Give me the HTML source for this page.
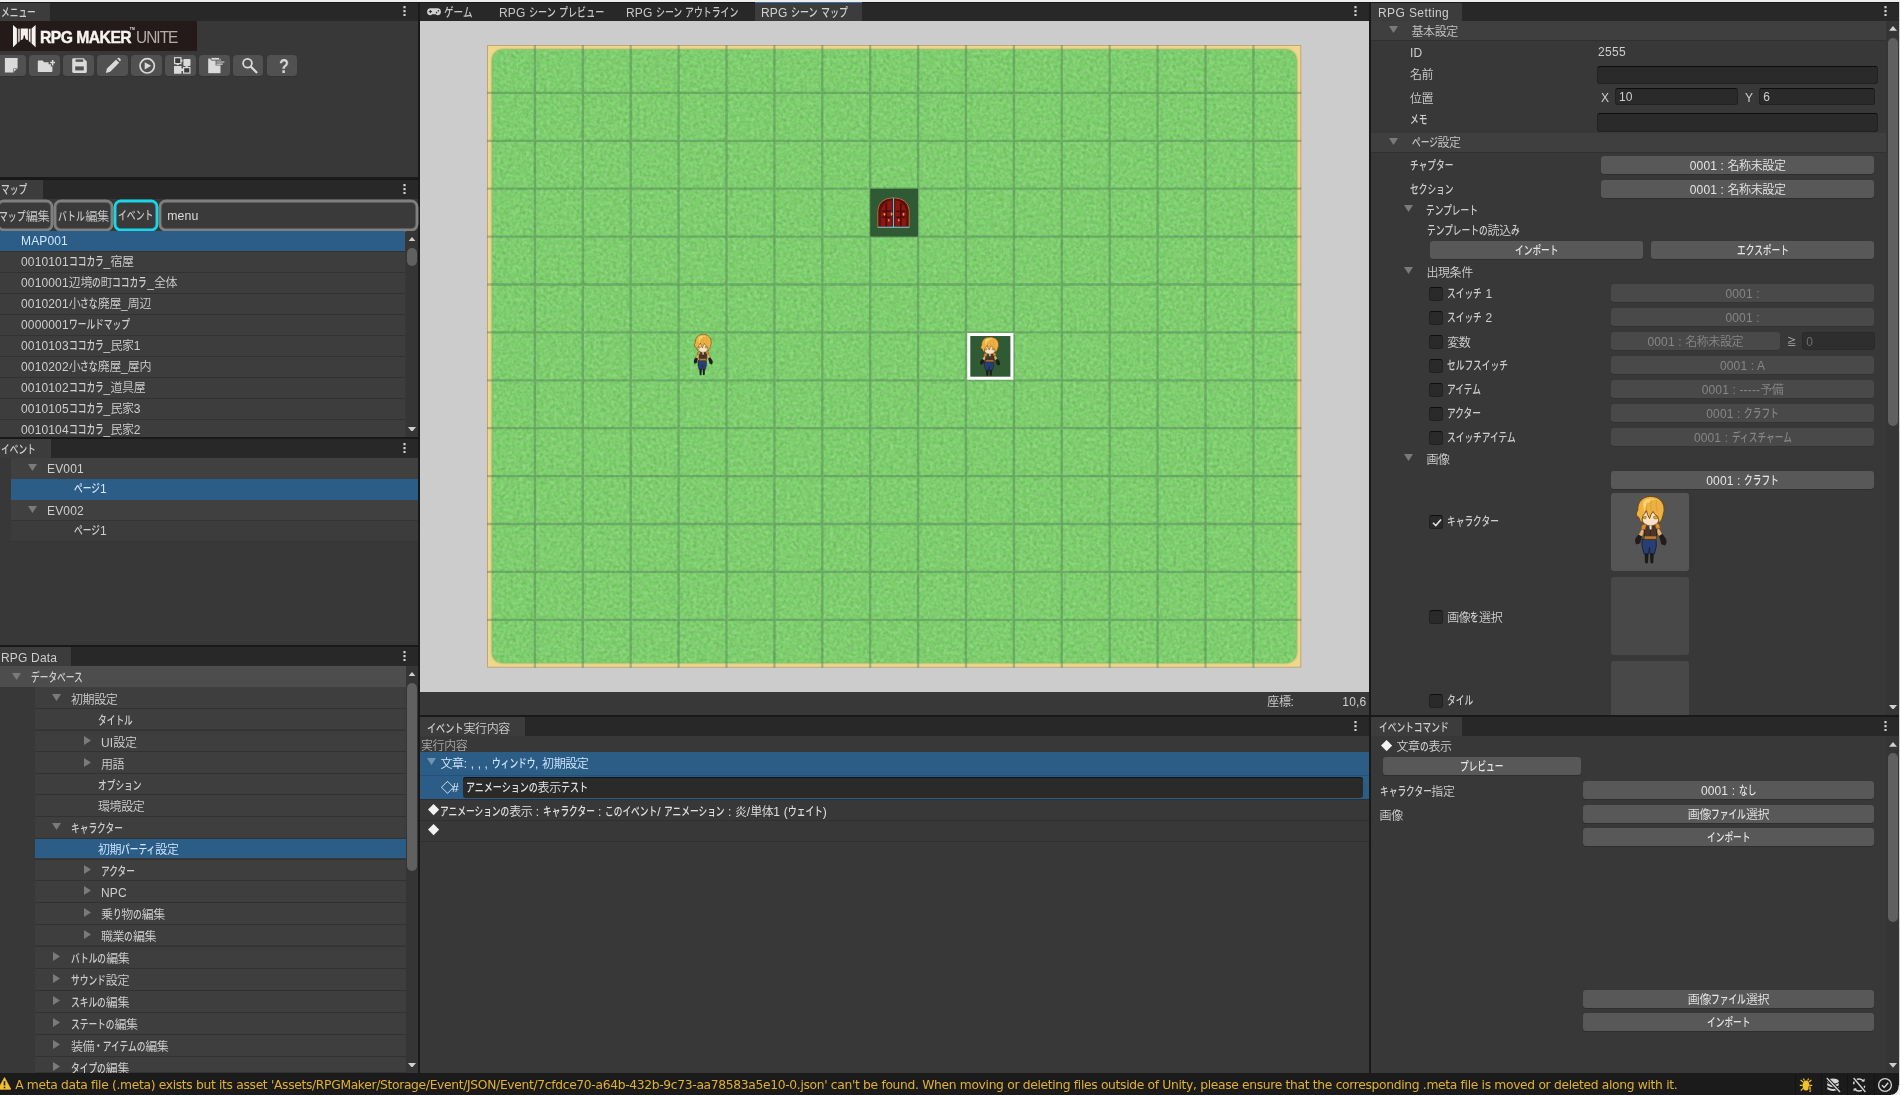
<!DOCTYPE html>
<html lang="ja"><head><meta charset="utf-8"><title>RPG Maker Unite</title>
<style>
html,body{margin:0;padding:0}
body{will-change:transform;width:1900px;height:1095px;overflow:hidden;position:relative;background:#383838;font-family:"Liberation Sans","Noto Sans CJK JP",sans-serif;font-size:12px;color:#cecece}
.t{position:absolute;height:16px;line-height:16px;white-space:nowrap;letter-spacing:.15px}
.k{display:inline-block;transform:scaleX(.725);transform-origin:0 50%;white-space:nowrap;letter-spacing:0;font-weight:500}
.j{letter-spacing:-.4px;font-weight:350}
.a{position:absolute;display:block}
.btn{position:absolute;box-sizing:border-box;background:#585858;border:0 solid #303030;box-shadow:0 .8px 0 #2b2b2b;border-radius:3px;display:flex;align-items:center;justify-content:center;white-space:nowrap;line-height:16px;color:#e4e4e4;letter-spacing:.15px;padding-top:2.2px}
.btn.dis{background:#494949;color:#868686;box-shadow:0 .6px 0 #303030}
.inp{position:absolute;box-sizing:border-box;background:#2a2a2a;border:1px solid #212121;border-top-color:#0d0d0d;border-radius:3px;line-height:16px;padding:2px 0 0 3px;display:flex;align-items:center;white-space:nowrap;color:#cecece}
.inp.dis{color:#6e6e6e;background:#2e2e2e;border-color:#2a2a2a}
.chk{position:absolute;box-sizing:border-box;width:14px;height:14px;background:#2a2a2a;border:1px solid #212121;border-top-color:#0d0d0d;border-radius:3px}
.tab{position:absolute;background:#3c3c3c;height:18px}
</style></head><body>

<div style="position:absolute;left:0px;top:0px;width:1900.00px;height:2.00px;background:#eeeeee;"></div>
<div style="position:absolute;left:0px;top:2px;width:1900.00px;height:1.00px;background:#191919;"></div>
<div style="position:absolute;left:418px;top:3px;width:2.00px;height:1070.00px;background:#191919;"></div>
<div style="position:absolute;left:1369px;top:3px;width:2.00px;height:1070.00px;background:#191919;"></div>
<div style="position:absolute;left:0px;top:3px;width:418.00px;height:18.00px;background:#282828;"></div>
<div style="position:absolute;left:0px;top:3px;width:50.00px;height:18.00px;background:#3c3c3c;"></div>
<div class="t" style="left:1px;top:4.5px;"><span class="k" style="margin-right:-13.20px">メニュー</span></div>
<svg class="a" style="left:403.0px;top:6.1px" width="3" height="10.2" viewBox="0 0 3 10.2"><path d="M.4 0h2.2v2.3h-2.2zM.4 3.95h2.2v2.3h-2.2zM.4 7.9h2.2v2.3h-2.2z" fill="#cfcfcf"/></svg>
<div style="position:absolute;left:0px;top:21px;width:197.00px;height:29.50px;background:#231a19;"></div>
<svg class="a" style="left:12px;top:24px" width="26" height="26" viewBox="0 0 26 26">
<path d="M1 1.1L4.9 4.5V19.4L1 23.3Z" fill="#f8f4f0"/>
<path d="M23.6 1.1L19.6 4.5V19.4L23.6 23.3Z" fill="#f8f4f0"/>
<path d="M5.9 4.8H7.7V17.2L5.9 18.4Z" fill="#f1ece7"/><path d="M5.9 4.8H6.5V18L5.9 18.4Z" fill="#8e8886"/>
<path d="M18.6 4.8H16.8V17.2L18.6 18.4Z" fill="#f1ece7"/><path d="M18.6 4.8H18V18L18.6 18.4Z" fill="#8e8886"/>
<path d="M8.7 4.5H15.9V16.2L14 15.6L13 13.4Q13.6 11.6 12.3 11.3Q11 11.6 11.6 13.4L10.6 15.6L8.7 16.2Z" fill="#f5f0ec"/>
</svg>
<div class="t" style="left:39.8px;top:28px;height:20px;line-height:20px;font-size:16.6px;font-weight:bold;color:#f7f3ef;letter-spacing:-.55px;-webkit-text-stroke:.45px #f7f3ef;transform:scaleX(.945);transform-origin:0 50%">RPG MAKER</div>
<div class="t" style="left:129.8px;top:26.4px;height:6px;line-height:6px;font-size:3.4px;font-weight:bold;color:#e8e2dc">TM</div>
<div class="t" style="left:136.3px;top:28px;height:20px;line-height:20px;font-size:16.6px;color:#cfc6c0;letter-spacing:-1.05px;font-weight:normal;opacity:.85;transform:scaleX(.93);transform-origin:0 50%">UNITE</div>
<div style="position:absolute;left:-4.6px;top:55px;width:30.60px;height:21.20px;background:#515151;border-radius:3.5px;box-shadow:0 .5px 0 #2c2c2c;"></div>
<svg class="a" style="left:1.20px;top:56px;overflow:visible" width="21" height="19" viewBox="0 0 21 19"><path d="M3.9 1.9H16.6V12.4L12.4 16.5H3.9Z" fill="#dadada"/><path d="M12.4 16.5V12.4H16.6Z" fill="#515151"/><path d="M12.9 15.4V12.9H15.4Z" fill="#dadada"/></svg>
<div style="position:absolute;left:29.32px;top:55px;width:30.60px;height:21.20px;background:#515151;border-radius:3.5px;box-shadow:0 .5px 0 #2c2c2c;"></div>
<svg class="a" style="left:35.12px;top:56px;overflow:visible" width="21" height="19" viewBox="0 0 21 19"><path d="M2.8 5.4Q2.8 4.6 3.6 4.6H7.6L9.2 6.2H13.8L15.4 7.6L17.4 9V15.3Q17.4 16.1 16.6 16.1H3.6Q2.8 16.1 2.8 15.3Z" fill="#dadada"/><path d="M17.6 2.6V10.6M13.6 6.6H21.6" stroke="#515151" stroke-width="3.4" fill="none"/><path d="M17.6 3.9V9.4M15.2 6.6H20" stroke="#dadada" stroke-width="1.5" fill="none"/></svg>
<div style="position:absolute;left:63.24px;top:55px;width:30.60px;height:21.20px;background:#515151;border-radius:3.5px;box-shadow:0 .5px 0 #2c2c2c;"></div>
<svg class="a" style="left:69.04px;top:56px;overflow:visible" width="21" height="19" viewBox="0 0 21 19"><path d="M3.2 3.6Q3.2 2.3 4.5 2.3H14.6L17.8 5.4V15.6Q17.8 16.9 16.5 16.9H4.5Q3.2 16.9 3.2 15.6Z" fill="#dadada"/><rect x="6.6" y="3.4" width="7.6" height="2.4" fill="#515151"/><rect x="6.2" y="10.4" width="8.6" height="4" fill="#515151"/></svg>
<div style="position:absolute;left:97.16000000000001px;top:55px;width:30.60px;height:21.20px;background:#515151;border-radius:3.5px;box-shadow:0 .5px 0 #2c2c2c;"></div>
<svg class="a" style="left:102.96px;top:56px;overflow:visible" width="21" height="19" viewBox="0 0 21 19"><path d="M2.8 16.9L4 12.6L13.2 3.4L16.4 6.6L7.2 15.8Z" fill="#dadada"/><path d="M14.2 2.6L15 1.9Q15.7 1.4 16.3 2L17.6 3.3Q18.2 3.9 17.6 4.5L17 5.4Z" fill="#dadada"/><path d="M13.2 3.4L16.4 6.6" stroke="#515151" stroke-width=".9"/></svg>
<div style="position:absolute;left:131.08px;top:55px;width:30.60px;height:21.20px;background:#515151;border-radius:3.5px;box-shadow:0 .5px 0 #2c2c2c;"></div>
<svg class="a" style="left:136.88px;top:56px;overflow:visible" width="21" height="19" viewBox="0 0 21 19"><circle cx="10.2" cy="9.86" r="7.15" fill="none" stroke="#dadada" stroke-width="1.7"/><path d="M7.7 6.2V13.5L14.2 9.86Z" fill="#dadada"/></svg>
<div style="position:absolute;left:165.00000000000003px;top:55px;width:30.60px;height:21.20px;background:#515151;border-radius:3.5px;box-shadow:0 .5px 0 #2c2c2c;"></div>
<svg class="a" style="left:170.80px;top:56px;overflow:visible" width="21" height="19" viewBox="0 0 21 19"><rect x="3.6" y="1.7" width="6.3" height="5.9" fill="#3a3a3a" stroke="#dadada" stroke-width="1.2"/><rect x="12.4" y="3" width="7.1" height="7.1" rx=".8" fill="#dadada"/><path d="M3 10.1H10.5V12.6H12V15H10.5V17.7H3Z" fill="#dadada"/><rect x="12.6" y="11.6" width="6.3" height="5.5" fill="#3a3a3a" stroke="#dadada" stroke-width="1.2"/><path d="M9.9 3.6h1.6v2.2h-1.6zM5.6 7.6h2.2v1.5h-2.2zM14.6 10.1h2.2v1.5h-2.2z" fill="#dadada"/></svg>
<div style="position:absolute;left:198.92000000000002px;top:55px;width:30.60px;height:21.20px;background:#515151;border-radius:3.5px;box-shadow:0 .5px 0 #2c2c2c;"></div>
<svg class="a" style="left:204.72px;top:56px;overflow:visible" width="21" height="19" viewBox="0 0 21 19"><path d="M3.2 2.6H15.5V17.2H3.2Z" fill="#dadada"/><rect x="6" y="1.4" width="8.5" height="2.8" rx=".6" fill="#dadada" stroke="#515151" stroke-width=".9"/><path d="M10.6 4.6H20.4V9.4H10.6Z" fill="#515151"/><path d="M11.4 6H19.4M11.4 8.1H17.6" stroke="#dadada" stroke-width="1.2"/></svg>
<div style="position:absolute;left:232.84px;top:55px;width:30.60px;height:21.20px;background:#515151;border-radius:3.5px;box-shadow:0 .5px 0 #2c2c2c;"></div>
<svg class="a" style="left:238.64px;top:56px;overflow:visible" width="21" height="19" viewBox="0 0 21 19"><circle cx="8.5" cy="7.25" r="4.4" fill="none" stroke="#dadada" stroke-width="1.8"/><path d="M11.9 10.7L17.4 16.2" stroke="#dadada" stroke-width="2.3" stroke-linecap="round"/></svg>
<div style="position:absolute;left:266.76px;top:55px;width:30.60px;height:21.20px;background:#515151;border-radius:3.5px;box-shadow:0 .5px 0 #2c2c2c;"></div>
<div class="t" style="left:277.5px;top:55.6px;height:20px;line-height:20px;font-size:19.4px;font-weight:bold;color:#dadada;transform:scaleX(.84);transform-origin:50% 50%">?</div>
<div style="position:absolute;left:0px;top:177.3px;width:418.00px;height:2.70px;background:#191919;"></div>
<div style="position:absolute;left:0px;top:180px;width:418.00px;height:18.60px;background:#282828;"></div>
<div style="position:absolute;left:0px;top:180px;width:43.00px;height:18.60px;background:#3c3c3c;"></div>
<div class="t" style="left:1px;top:182.0px;"><span class="k" style="margin-right:-9.90px">マップ</span></div>
<svg class="a" style="left:403.0px;top:183.6px" width="3" height="10.2" viewBox="0 0 3 10.2"><path d="M.4 0h2.2v2.3h-2.2zM.4 3.95h2.2v2.3h-2.2zM.4 7.9h2.2v2.3h-2.2z" fill="#cfcfcf"/></svg>
<div style="position:absolute;box-sizing:border-box;left:-3.5px;top:199.6px;width:56.6px;height:31px;border:2px solid #808080;box-shadow:0 0 0 .45px #808080,inset 0 0 0 .45px #808080;border-radius:7px;background:#3a3a3a"></div>
<div class="t" style="left:-0.8px;top:208.7px;color:#c8c8c8;font-size:12.2px;"><span class="k" style="margin-right:-10.06px">マップ</span><span class="j">編集</span></div>
<div style="position:absolute;box-sizing:border-box;left:54.1px;top:199.6px;width:59.2px;height:31px;border:2px solid #808080;box-shadow:0 0 0 .45px #808080,inset 0 0 0 .45px #808080;border-radius:7px;background:#3a3a3a"></div>
<div class="t" style="left:58.3px;top:208.7px;color:#c8c8c8;font-size:12.2px;"><span class="k" style="margin-right:-10.06px">バトル</span><span class="j">編集</span></div>
<div style="position:absolute;box-sizing:border-box;left:114.1px;top:199.6px;width:44.2px;height:31px;border:2px solid #19d7e6;box-shadow:0 0 0 .45px #19d7e6,inset 0 0 0 .45px #19d7e6;border-radius:7px;background:#3a3a3a"></div>
<div class="t" style="left:118.2px;top:208.0px;color:#c8c8c8;font-size:12.2px;"><span class="k" style="margin-right:-13.42px">イベント</span></div>
<div style="position:absolute;box-sizing:border-box;left:159.1px;top:199.6px;width:258.6px;height:31px;border:2px solid #808080;box-shadow:0 0 0 .45px #808080,inset 0 0 0 .45px #808080;border-radius:7px;background:#3a3a3a"></div>
<div class="t" style="left:167.2px;top:208.2px;color:#dcdcdc;font-size:12.3px;">menu</div>
<div style="position:absolute;left:0px;top:231px;width:405.00px;height:206.00px;background:#3d3d3d;"></div>
<div style="position:absolute;left:0px;top:231px;width:405.00px;height:20.00px;background:#2c5d87;"></div>
<div style="position:absolute;left:0px;top:251px;width:405.00px;height:1.00px;background:#323232;"></div>
<div class="t" style="left:21px;top:232.5px;color:#cfe6ff;">MAP001</div>
<div style="position:absolute;left:0px;top:272px;width:405.00px;height:1.00px;background:#323232;"></div>
<div class="t" style="left:21px;top:254.2px;">0010101<span class="k" style="margin-right:-13.20px">ココカラ</span>_<span class="j">宿屋</span></div>
<div style="position:absolute;left:0px;top:293px;width:405.00px;height:1.00px;background:#323232;"></div>
<div class="t" style="left:21px;top:275.2px;">0010001<span class="j">辺境</span><span class="k" style="margin-right:-3.30px">の</span><span class="j">町</span><span class="k" style="margin-right:-13.20px">ココカラ</span>_<span class="j">全体</span></div>
<div style="position:absolute;left:0px;top:314px;width:405.00px;height:1.00px;background:#323232;"></div>
<div class="t" style="left:21px;top:296.2px;">0010201<span class="j">小</span><span class="k" style="margin-right:-6.60px">さな</span><span class="j">廃屋</span>_<span class="j">周辺</span></div>
<div style="position:absolute;left:0px;top:335px;width:405.00px;height:1.00px;background:#323232;"></div>
<div class="t" style="left:21px;top:316.5px;">0000001<span class="k" style="margin-right:-23.10px">ワールドマップ</span></div>
<div style="position:absolute;left:0px;top:356px;width:405.00px;height:1.00px;background:#323232;"></div>
<div class="t" style="left:21px;top:338.2px;">0010103<span class="k" style="margin-right:-13.20px">ココカラ</span>_<span class="j">民家</span>1</div>
<div style="position:absolute;left:0px;top:377px;width:405.00px;height:1.00px;background:#323232;"></div>
<div class="t" style="left:21px;top:359.2px;">0010202<span class="j">小</span><span class="k" style="margin-right:-6.60px">さな</span><span class="j">廃屋</span>_<span class="j">屋内</span></div>
<div style="position:absolute;left:0px;top:398px;width:405.00px;height:1.00px;background:#323232;"></div>
<div class="t" style="left:21px;top:380.2px;">0010102<span class="k" style="margin-right:-13.20px">ココカラ</span>_<span class="j">道具屋</span></div>
<div style="position:absolute;left:0px;top:419px;width:405.00px;height:1.00px;background:#323232;"></div>
<div class="t" style="left:21px;top:401.2px;">0010105<span class="k" style="margin-right:-13.20px">ココカラ</span>_<span class="j">民家</span>3</div>
<div style="position:absolute;left:0px;top:440px;width:405.00px;height:1.00px;background:#323232;"></div>
<div class="t" style="left:21px;top:422.2px;">0010104<span class="k" style="margin-right:-13.20px">ココカラ</span>_<span class="j">民家</span>2</div>
<div style="position:absolute;left:405.5px;top:231px;width:12.50px;height:206.00px;background:#353535;"></div>
<svg class="a" style="left:407.75px;top:236.6px" width="8" height="4.8" viewBox="0 0 8 4.8"><path d="M0 4.8H8L4 0Z" fill="#d0d0d0"/></svg>
<svg class="a" style="left:407.75px;top:426.6px" width="8" height="4.8" viewBox="0 0 8 4.8"><path d="M0 0H8L4 4.8Z" fill="#d0d0d0"/></svg>
<div style="position:absolute;left:406.95px;top:248px;width:9.60px;height:18.20px;background:#606060;border-radius:5px;"></div>
<div style="position:absolute;left:0px;top:437px;width:418.00px;height:2.30px;background:#191919;"></div>
<div style="position:absolute;left:0px;top:439.3px;width:418.00px;height:18.30px;background:#282828;"></div>
<div style="position:absolute;left:0px;top:439.3px;width:51.00px;height:18.30px;background:#3c3c3c;"></div>
<div class="t" style="left:1px;top:441.5px;"><span class="k" style="margin-right:-13.20px">イベント</span></div>
<svg class="a" style="left:403.0px;top:442.6px" width="3" height="10.2" viewBox="0 0 3 10.2"><path d="M.4 0h2.2v2.3h-2.2zM.4 3.95h2.2v2.3h-2.2zM.4 7.9h2.2v2.3h-2.2z" fill="#cfcfcf"/></svg>
<div style="position:absolute;left:11px;top:458px;width:407.00px;height:21.00px;background:#404040;"></div>
<div style="position:absolute;left:11px;top:479px;width:407.00px;height:20.50px;background:#2c5d87;"></div>
<div style="position:absolute;left:11px;top:500px;width:407.00px;height:20.00px;background:#404040;"></div>
<div style="position:absolute;left:11px;top:520px;width:407.00px;height:1.00px;background:#343434;"></div>
<div style="position:absolute;left:11px;top:521px;width:407.00px;height:20.00px;background:#3c3c3c;"></div>
<div style="position:absolute;left:11px;top:541px;width:407.00px;height:1.00px;background:#353535;"></div>
<svg class="a" style="left:28.0px;top:463.5px" width="9" height="7" viewBox="0 0 9 7"><path d="M0 0H9L4.5 7Z" fill="#7a7a7a"/></svg>
<div class="t" style="left:47px;top:461.0px;">EV001</div>
<div class="t" style="left:74px;top:481.2px;color:#cfe6ff;"><span class="k" style="margin-right:-9.90px">ページ</span>1</div>
<svg class="a" style="left:28.0px;top:505.5px" width="9" height="7" viewBox="0 0 9 7"><path d="M0 0H9L4.5 7Z" fill="#7a7a7a"/></svg>
<div class="t" style="left:47px;top:503.0px;">EV002</div>
<div class="t" style="left:74px;top:523.1px;"><span class="k" style="margin-right:-9.90px">ページ</span>1</div>
<div style="position:absolute;left:0px;top:645px;width:418.00px;height:2.30px;background:#191919;"></div>
<div style="position:absolute;left:0px;top:647.3px;width:418.00px;height:18.70px;background:#282828;"></div>
<div style="position:absolute;left:0px;top:647.3px;width:71.00px;height:18.70px;background:#3c3c3c;"></div>
<div class="t" style="left:1px;top:649.5px;letter-spacing:.18px;">RPG Data</div>
<svg class="a" style="left:403.0px;top:650.6px" width="3" height="10.2" viewBox="0 0 3 10.2"><path d="M.4 0h2.2v2.3h-2.2zM.4 3.95h2.2v2.3h-2.2zM.4 7.9h2.2v2.3h-2.2z" fill="#cfcfcf"/></svg>
<div style="position:absolute;left:0px;top:666px;width:405.50px;height:21.00px;background:#4d4d4d;"></div>
<svg class="a" style="left:12.0px;top:672.5px" width="9" height="7" viewBox="0 0 9 7"><path d="M0 0H9L4.5 7Z" fill="#7a7a7a"/></svg>
<div class="t" style="left:31px;top:669.5px;"><span class="k" style="margin-right:-19.80px">データベース</span></div>
<div style="position:absolute;left:35px;top:687px;width:370.50px;height:21.30px;background:#3e3e3e;"></div>
<div style="position:absolute;left:35px;top:708.3px;width:370.50px;height:1.00px;background:#323232;"></div>
<svg class="a" style="left:52.0px;top:693.7px" width="9" height="7" viewBox="0 0 9 7"><path d="M0 0H9L4.5 7Z" fill="#7a7a7a"/></svg>
<div class="t" style="left:71px;top:692.4px;"><span class="j">初期設定</span></div>
<div style="position:absolute;left:35px;top:709.3px;width:370.50px;height:20.20px;background:#3e3e3e;"></div>
<div style="position:absolute;left:35px;top:729.5px;width:370.50px;height:1.00px;background:#323232;"></div>
<div class="t" style="left:98px;top:712.7px;"><span class="k" style="margin-right:-13.20px">タイトル</span></div>
<div style="position:absolute;left:35px;top:730.5px;width:370.50px;height:20.50px;background:#3e3e3e;"></div>
<div style="position:absolute;left:35px;top:751px;width:370.50px;height:1.00px;background:#323232;"></div>
<svg class="a" style="left:83.5px;top:735.7px" width="7" height="9" viewBox="0 0 7 9"><path d="M0 0V9L7 4.5Z" fill="#7a7a7a"/></svg>
<div class="t" style="left:101px;top:735.4px;">UI<span class="j">設定</span></div>
<div style="position:absolute;left:35px;top:752px;width:370.50px;height:21.00px;background:#3e3e3e;"></div>
<div style="position:absolute;left:35px;top:773px;width:370.50px;height:1.00px;background:#323232;"></div>
<svg class="a" style="left:83.5px;top:757.7px" width="7" height="9" viewBox="0 0 7 9"><path d="M0 0V9L7 4.5Z" fill="#7a7a7a"/></svg>
<div class="t" style="left:101px;top:757.4px;"><span class="j">用語</span></div>
<div style="position:absolute;left:35px;top:774px;width:370.50px;height:20.40px;background:#3e3e3e;"></div>
<div style="position:absolute;left:35px;top:794.4px;width:370.50px;height:1.00px;background:#323232;"></div>
<div class="t" style="left:98px;top:777.5px;"><span class="k" style="margin-right:-16.50px">オプション</span></div>
<div style="position:absolute;left:35px;top:795.4px;width:370.50px;height:20.40px;background:#3e3e3e;"></div>
<div style="position:absolute;left:35px;top:815.8px;width:370.50px;height:1.00px;background:#323232;"></div>
<div class="t" style="left:98px;top:799.4px;"><span class="j">環境設定</span></div>
<div style="position:absolute;left:35px;top:816.8px;width:370.50px;height:20.80px;background:#3e3e3e;"></div>
<div style="position:absolute;left:35px;top:837.6px;width:370.50px;height:1.00px;background:#323232;"></div>
<svg class="a" style="left:52.0px;top:822.7px" width="9" height="7" viewBox="0 0 9 7"><path d="M0 0H9L4.5 7Z" fill="#7a7a7a"/></svg>
<div class="t" style="left:71px;top:820.7px;"><span class="k" style="margin-right:-19.80px">キャラクター</span></div>
<div style="position:absolute;left:35px;top:838.6px;width:370.50px;height:19.90px;background:#2c5d87;"></div>
<div style="position:absolute;left:35px;top:858.5px;width:370.50px;height:1.00px;background:#323232;"></div>
<div class="t" style="left:98px;top:842.2px;color:#cfe6ff;"><span class="j">初期</span><span class="k" style="margin-right:-13.20px">パーティ</span><span class="j">設定</span></div>
<div style="position:absolute;left:35px;top:859.5px;width:370.50px;height:20.50px;background:#3e3e3e;"></div>
<div style="position:absolute;left:35px;top:880px;width:370.50px;height:1.00px;background:#323232;"></div>
<svg class="a" style="left:83.5px;top:864.5px" width="7" height="9" viewBox="0 0 7 9"><path d="M0 0V9L7 4.5Z" fill="#7a7a7a"/></svg>
<div class="t" style="left:101px;top:863.5px;"><span class="k" style="margin-right:-13.20px">アクター</span></div>
<div style="position:absolute;left:35px;top:881px;width:370.50px;height:21.00px;background:#3e3e3e;"></div>
<div style="position:absolute;left:35px;top:902px;width:370.50px;height:1.00px;background:#323232;"></div>
<svg class="a" style="left:83.5px;top:885.5px" width="7" height="9" viewBox="0 0 7 9"><path d="M0 0V9L7 4.5Z" fill="#7a7a7a"/></svg>
<div class="t" style="left:101px;top:884.5px;">NPC</div>
<div style="position:absolute;left:35px;top:903px;width:370.50px;height:20.60px;background:#3e3e3e;"></div>
<div style="position:absolute;left:35px;top:923.6px;width:370.50px;height:1.00px;background:#323232;"></div>
<svg class="a" style="left:83.5px;top:907.5px" width="7" height="9" viewBox="0 0 7 9"><path d="M0 0V9L7 4.5Z" fill="#7a7a7a"/></svg>
<div class="t" style="left:101px;top:907.2px;"><span class="j">乗</span><span class="k" style="margin-right:-3.30px">り</span><span class="j">物</span><span class="k" style="margin-right:-3.30px">の</span><span class="j">編集</span></div>
<div style="position:absolute;left:35px;top:924.6px;width:370.50px;height:20.90px;background:#3e3e3e;"></div>
<div style="position:absolute;left:35px;top:945.5px;width:370.50px;height:1.00px;background:#323232;"></div>
<svg class="a" style="left:83.5px;top:929.5px" width="7" height="9" viewBox="0 0 7 9"><path d="M0 0V9L7 4.5Z" fill="#7a7a7a"/></svg>
<div class="t" style="left:101px;top:929.2px;"><span class="j">職業</span><span class="k" style="margin-right:-3.30px">の</span><span class="j">編集</span></div>
<div style="position:absolute;left:35px;top:946.5px;width:370.50px;height:21.00px;background:#3e3e3e;"></div>
<div style="position:absolute;left:35px;top:967.5px;width:370.50px;height:1.00px;background:#323232;"></div>
<svg class="a" style="left:53.0px;top:951.5px" width="7" height="9" viewBox="0 0 7 9"><path d="M0 0V9L7 4.5Z" fill="#7a7a7a"/></svg>
<div class="t" style="left:71px;top:951.2px;"><span class="k" style="margin-right:-13.20px">バトルの</span><span class="j">編集</span></div>
<div style="position:absolute;left:35px;top:968.5px;width:370.50px;height:21.00px;background:#3e3e3e;"></div>
<div style="position:absolute;left:35px;top:989.5px;width:370.50px;height:1.00px;background:#323232;"></div>
<svg class="a" style="left:53.0px;top:973.5px" width="7" height="9" viewBox="0 0 7 9"><path d="M0 0V9L7 4.5Z" fill="#7a7a7a"/></svg>
<div class="t" style="left:71px;top:973.2px;"><span class="k" style="margin-right:-13.20px">サウンド</span><span class="j">設定</span></div>
<div style="position:absolute;left:35px;top:990.5px;width:370.50px;height:21.00px;background:#3e3e3e;"></div>
<div style="position:absolute;left:35px;top:1011.5px;width:370.50px;height:1.00px;background:#323232;"></div>
<svg class="a" style="left:53.0px;top:995.5px" width="7" height="9" viewBox="0 0 7 9"><path d="M0 0V9L7 4.5Z" fill="#7a7a7a"/></svg>
<div class="t" style="left:71px;top:995.2px;"><span class="k" style="margin-right:-13.20px">スキルの</span><span class="j">編集</span></div>
<div style="position:absolute;left:35px;top:1012.5px;width:370.50px;height:21.00px;background:#3e3e3e;"></div>
<div style="position:absolute;left:35px;top:1033.5px;width:370.50px;height:1.00px;background:#323232;"></div>
<svg class="a" style="left:53.0px;top:1017.5px" width="7" height="9" viewBox="0 0 7 9"><path d="M0 0V9L7 4.5Z" fill="#7a7a7a"/></svg>
<div class="t" style="left:71px;top:1017.2px;"><span class="k" style="margin-right:-16.50px">ステートの</span><span class="j">編集</span></div>
<div style="position:absolute;left:35px;top:1034.5px;width:370.50px;height:21.00px;background:#3e3e3e;"></div>
<div style="position:absolute;left:35px;top:1055.5px;width:370.50px;height:1.00px;background:#323232;"></div>
<svg class="a" style="left:53.0px;top:1039.5px" width="7" height="9" viewBox="0 0 7 9"><path d="M0 0V9L7 4.5Z" fill="#7a7a7a"/></svg>
<div class="t" style="left:71px;top:1039.2px;"><span class="j">装備</span><span class="k" style="margin-right:-19.80px">・アイテムの</span><span class="j">編集</span></div>
<div style="position:absolute;left:35px;top:1056.5px;width:370.50px;height:15.50px;background:#3e3e3e;"></div>
<div style="position:absolute;left:35px;top:1072px;width:370.50px;height:1.00px;background:#323232;"></div>
<svg class="a" style="left:53.0px;top:1061.5px" width="7" height="9" viewBox="0 0 7 9"><path d="M0 0V9L7 4.5Z" fill="#7a7a7a"/></svg>
<div class="t" style="left:71px;top:1061.2px;"><span class="k" style="margin-right:-13.20px">タイプの</span><span class="j">編集</span></div>
<div style="position:absolute;left:405.5px;top:666px;width:12.50px;height:407.00px;background:#353535;"></div>
<svg class="a" style="left:407.75px;top:671.6px" width="8" height="4.8" viewBox="0 0 8 4.8"><path d="M0 4.8H8L4 0Z" fill="#d0d0d0"/></svg>
<svg class="a" style="left:407.75px;top:1062.6px" width="8" height="4.8" viewBox="0 0 8 4.8"><path d="M0 0H8L4 4.8Z" fill="#d0d0d0"/></svg>
<div style="position:absolute;left:406.95px;top:683px;width:9.60px;height:188.00px;background:#606060;border-radius:5px;"></div>
<div style="position:absolute;left:420px;top:3px;width:949.00px;height:18.00px;background:#282828;"></div>
<svg class="a" style="left:427px;top:6.5px" width="14" height="10" viewBox="0 0 14 10"><path d="M3.6 1.2H10.4A3.5 3.5 0 0 1 13.9 4.7A3.4 3.4 0 0 1 10.6 8.3Q9.4 8.3 8.8 7.3H5.2Q4.6 8.3 3.4 8.3A3.4 3.4 0 0 1 .1 4.7A3.5 3.5 0 0 1 3.6 1.2Z" fill="#d0d0d0"/><path d="M3.4 3V6.2M1.8 4.6H5" stroke="#282828" stroke-width="1"/><circle cx="9.6" cy="5.6" r=".8" fill="#282828"/><circle cx="11.4" cy="3.8" r=".8" fill="#282828"/></svg>
<div class="t" style="left:443.5px;top:4.5px;color:#c8c8c8;"><span class="k" style="transform:scaleX(0.8);margin-right:-7.20px">ゲーム</span></div>
<div class="t" style="left:499px;top:4.5px;color:#c8c8c8;">RPG <span class="k" style="transform:scaleX(0.755);margin-right:-8.82px">シーン</span> <span class="k" style="transform:scaleX(0.755);margin-right:-14.70px">プレビュー</span></div>
<div class="t" style="left:626px;top:4.5px;color:#c8c8c8;">RPG <span class="k" style="transform:scaleX(0.74);margin-right:-9.36px">シーン</span> <span class="k" style="transform:scaleX(0.74);margin-right:-18.72px">アウトライン</span></div>
<div style="position:absolute;left:755px;top:3px;width:106.50px;height:18.00px;background:#3c3c3c;"></div>
<div style="position:absolute;left:755px;top:2.2px;width:106.50px;height:1.20px;background:#3d6fa3;"></div>
<div class="t" style="left:761px;top:4.5px;color:#d2d2d2;">RPG <span class="k" style="transform:scaleX(0.745);margin-right:-9.18px">シーン</span> <span class="k" style="transform:scaleX(0.745);margin-right:-9.18px">マップ</span></div>
<svg class="a" style="left:1354.0px;top:6.1px" width="3" height="10.2" viewBox="0 0 3 10.2"><path d="M.4 0h2.2v2.3h-2.2zM.4 3.95h2.2v2.3h-2.2zM.4 7.9h2.2v2.3h-2.2z" fill="#cfcfcf"/></svg>
<div style="position:absolute;left:420px;top:21px;width:949.00px;height:670.60px;background:#cccccc;"></div>
<svg class="a" style="left:487.4px;top:45.1px" width="814.30" height="622.70" viewBox="0 0 814.30 622.70"><defs>
<filter id="gn" x="0" y="0" width="100%" height="100%"><feTurbulence type="fractalNoise" baseFrequency="0.3" numOctaves="2" seed="7" result="n"/><feColorMatrix in="n" type="matrix" values="0 0 0 0 0  0 0 0 0 0  0 0 0 0 0  1.6 1.2 0 0 -1.05"/><feComposite in2="SourceGraphic" operator="in"/></filter>
<filter id="gl" x="0" y="0" width="100%" height="100%"><feTurbulence type="fractalNoise" baseFrequency="0.28" numOctaves="2" seed="23" result="n"/><feColorMatrix in="n" type="matrix" values="0 0 0 0 1  0 0 0 0 1  0 0 0 0 1  0 1.5 1.3 0 -1.1"/><feComposite in2="SourceGraphic" operator="in"/></filter>
<filter id="bl"><feGaussianBlur stdDeviation="0.9"/></filter>
<symbol id="chr" viewBox="0 0 32 68" preserveAspectRatio="none">
<path d="M9.6 56.6L10 66.4Q11.5 68.4 13 66.4L13.6 56.6ZM15 56.6L15.4 66.4Q16.9 68.4 18.3 66.4L18.8 56.6Z" fill="#1e1a19"/>
<path d="M7.2 43.2Q6 50 9 57.8H13.8L14.4 51.4L15 57.8H19.4Q22.4 50 21 43.2Z" fill="#293e72" stroke="#131b36" stroke-width=".8"/>
<path d="M7.8 30.6L3.2 39.6L6.8 41.4L10.4 34Z" fill="#e6b274" stroke="#6b4623" stroke-width=".5"/>
<path d="M22.8 29.8L27.6 38.8L24.2 40.8L20.4 33.6Z" fill="#e6b274" stroke="#6b4623" stroke-width=".5"/>
<path d="M3.4 38.4L.4 42.4Q-.8 46 1.6 48.4L5.2 47.2L6.2 43.2L7.2 40.4Z" fill="#231c1a"/>
<path d="M27.4 37.8L31 43Q32.6 46.8 30 49.6L26.2 48.2L25.2 43.8L24 40Z" fill="#231c1a"/>
<path d="M8.6 29Q15.5 27 22.4 28.6L21.2 41.4H9.6Z" fill="#4a3629" stroke="#22160f" stroke-width=".8"/>
<path d="M6.6 29.8Q8.4 27.6 11.6 28.2L10.2 33.8L6 33.2ZM24.6 28.8Q22.8 26.8 19.6 27.6L21.2 33L25.2 32Z" fill="#d98e2c" stroke="#6b4218" stroke-width=".5"/>
<path d="M14.2 28.4H16.8L16.4 33.6H14.8Z" fill="#f2ede4"/>
<path d="M15.4 33.6V40" stroke="#2a1c13" stroke-width=".6"/>
<rect x="9.2" y="40" width="12.2" height="3.2" fill="#bd782c" stroke="#4e3214" stroke-width=".6"/>
<ellipse cx="15.6" cy="21.4" rx="9" ry="8.4" fill="#f8e1c4" stroke="#8a5f3a" stroke-width=".6"/>
<path d="M8.2 21.2Q9.6 19.8 11.2 20.6L10.8 22.6Q9.4 23 8.4 22.4ZM18.6 20.6Q20.6 19.4 22.6 20.6L22.4 22.6Q20.4 23.4 18.8 22.4Z" fill="#d9b02e" stroke="#6d4a18" stroke-width=".5"/>
<path d="M15.6 .4C7.2 .4 2.4 6.4 2.8 14Q.8 17 1.4 19.8Q3.2 20 4 22Q5 25.4 7.2 27.4Q6.6 22.4 8.2 19.4Q9.8 17.6 11.4 14.6Q12 18.6 14.6 22.6Q15.8 18 18 15.4Q19.6 19 22.6 20.4Q24 23.6 23.8 27.4Q27.4 24 28 19.4Q29.8 14.6 28.8 10.4C27.6 4.4 22.6 .4 15.6 .4Z" fill="#edb043" stroke="#6e4212" stroke-width=".9"/>
<path d="M8.6 5Q13.6 1.4 20.8 3.2Q14.8 4.2 11.8 8.8Q9.8 11.8 9.6 15.6Q7.2 10.4 8.6 5Z" fill="#fad878" opacity=".85"/>
<path d="M16.4 3.4Q15.2 9.4 16.4 15M21.4 5.4Q20.6 10.6 22.2 15.6M12.4 6.4Q11.4 10.4 11.6 14" stroke="#c98a2a" stroke-width=".7" fill="none" opacity=".7"/>
</symbol>
</defs><rect x="0.5" y="0.5" width="813.30" height="621.70" fill="#efd88e" stroke="#bfa775" stroke-width="1"/><rect x="5.0" y="4.6" width="804.70" height="613.50" rx="10.4" fill="#5aa84e" filter="url(#bl)"/><rect x="5.4" y="5" width="803.90" height="612.70" rx="10" fill="#7dd46c"/><rect x="5.4" y="5" width="803.90" height="612.70" rx="10" fill="#4fa548" filter="url(#gn)" opacity=".12"/><rect x="5.4" y="5" width="803.90" height="612.70" rx="10" fill="#a6ee98" filter="url(#gl)" opacity=".16"/><path d="M47.90 0V622.70M95.80 0V622.70M143.70 0V622.70M191.60 0V622.70M239.50 0V622.70M287.40 0V622.70M335.30 0V622.70M383.20 0V622.70M431.10 0V622.70M479.00 0V622.70M526.90 0V622.70M574.80 0V622.70M622.70 0V622.70M670.60 0V622.70M718.50 0V622.70M766.40 0V622.70M0 47.90H814.30M0 95.80H814.30M0 143.70H814.30M0 191.60H814.30M0 239.50H814.30M0 287.40H814.30M0 335.30H814.30M0 383.20H814.30M0 431.10H814.30M0 479.00H814.30M0 526.90H814.30M0 574.80H814.30" stroke="#4f7a55" stroke-opacity=".42" stroke-width="2.3" fill="none"/><rect x="383.20" y="143.70" width="47.9" height="47.9" fill="#2f5a33"/><g transform="translate(390.80,152.30)"><path d="M0 30V13Q1 1 15.6 .4Q30.4 1 31.4 13V30Z" fill="#5e0f0d" stroke="#b07a40" stroke-width=".9"/><path d="M3 29V13Q6 4 14 3V29ZM17.4 29V3Q25.6 4 28.4 13V29Z" fill="#8a1712"/><path d="M4 14H13M4 20H13M8.5 6V29M18.5 14H27.5M18.5 20H27.5M23 6V29" stroke="#3a0807" stroke-width="1.6" opacity=".75"/><path d="M5.5 17l1.2 -1.6l1.2 1.6l-1.2 1.6zM10 23l1 -1.4l1 1.4l-1 1.4zM20 23l1 -1.4l1 1.4l-1 1.4zM24.5 17l1.2 -1.6l1.2 1.6l-1.2 1.6zM12.6 16.6l1.2 -2l1.2 2l-1.2 2z" fill="#e0a95a" opacity=".9"/><path d="M15.7 .4V30M0 30H31.4" stroke="#58c7d8" stroke-width="1.1"/></g><rect x="481.80" y="289.50" width="43.1" height="43.7" fill="#2f5a33" stroke="#ffffff" stroke-width="3"/><use href="#chr" x="492.90" y="291.90" width="20.6" height="39.2"/><use href="#chr" x="206.60" y="289.10" width="19.4" height="41.6"/></svg>
<div style="position:absolute;left:420px;top:691.6px;width:949.00px;height:23.40px;background:#383838;"></div>
<div class="t" style="left:1267.3px;top:694.2px;"><span class="j">座標</span>:</div>
<div class="t" style="left:1342.3px;top:693.5px;letter-spacing:.2px;">10,6</div>
<div style="position:absolute;left:420px;top:715px;width:949.00px;height:2.30px;background:#191919;"></div>
<div style="position:absolute;left:420px;top:717.3px;width:949.00px;height:18.70px;background:#282828;"></div>
<div style="position:absolute;left:420px;top:717.3px;width:105.00px;height:18.70px;background:#3c3c3c;"></div>
<div class="t" style="left:427px;top:720.7px;"><span class="k" style="transform:scaleX(0.76);margin-right:-11.52px">イベント</span><span class="j">実行内容</span></div>
<svg class="a" style="left:1354.0px;top:720.6px" width="3" height="10.2" viewBox="0 0 3 10.2"><path d="M.4 0h2.2v2.3h-2.2zM.4 3.95h2.2v2.3h-2.2zM.4 7.9h2.2v2.3h-2.2z" fill="#cfcfcf"/></svg>
<div class="t" style="left:421px;top:737.7px;color:#a8a8a8;"><span class="j">実行内容</span></div>
<div style="position:absolute;left:420px;top:752px;width:949.00px;height:22.50px;background:#2c5d87;"></div>
<div style="position:absolute;left:420px;top:774.5px;width:949.00px;height:1.00px;background:#26507a;"></div>
<div style="position:absolute;left:420px;top:775.5px;width:949.00px;height:23.50px;background:#2c5d87;"></div>
<svg class="a" style="left:427.0px;top:758.0px" width="9" height="7" viewBox="0 0 9 7"><path d="M0 0H9L4.5 7Z" fill="#6f94b8"/></svg>
<div class="t" style="left:440.5px;top:756.2px;color:#cfe6ff;"><span class="j">文章</span>: , , , <span class="k" style="margin-right:-16.50px">ウィンドウ</span>, <span class="j">初期設定</span></div>
<div class="t" style="left:441px;top:779.5px;color:#e6f0fa;font-size:13px;">◇</div>
<div class="t" style="left:452px;top:779.5px;color:#e6f0fa;">#</div>
<div style="position:absolute;left:463px;top:777px;width:899.50px;height:20.50px;background:#2a2a2a;border-radius:3px;box-shadow:inset 0 1px 0 #151515;"></div>
<div class="t" style="left:466px;top:779.7px;color:#e0e0e0;"><span class="k" style="transform:scaleX(0.75);margin-right:-24.00px">アニメーションの</span><span class="j">表示</span><span class="k" style="transform:scaleX(0.75);margin-right:-9.00px">テスト</span></div>
<div style="position:absolute;left:420px;top:799px;width:949.00px;height:1.00px;background:#2f2f2f;"></div>
<div style="position:absolute;left:420px;top:820px;width:949.00px;height:1.00px;background:#2f2f2f;"></div>
<div style="position:absolute;left:420px;top:840.5px;width:949.00px;height:1.00px;background:#303030;"></div>
<svg class="a" style="left:427.9px;top:804.4px" width="11.2" height="11.2" viewBox="0 0 11.2 11.2"><path d="M5.6 0L11.2 5.6L5.6 11.2L0 5.6Z" fill="#f2f2f2"/></svg>
<div class="t" style="left:440px;top:803.7px;color:#e0e0e0;"><span class="k" style="margin-right:-26.40px">アニメーションの</span><span class="j">表示</span> : <span class="k" style="margin-right:-19.80px">キャラクター</span> : <span class="k" style="margin-right:-19.80px">このイベント</span>/ <span class="k" style="margin-right:-23.10px">アニメーション</span> : <span class="j">炎</span>/<span class="j">単体</span>1 (<span class="k" style="margin-right:-13.20px">ウェイト</span>)</div>
<svg class="a" style="left:427.9px;top:824.4px" width="11.2" height="11.2" viewBox="0 0 11.2 11.2"><path d="M5.6 0L11.2 5.6L5.6 11.2L0 5.6Z" fill="#f2f2f2"/></svg>
<div style="position:absolute;left:1371px;top:3px;width:529.00px;height:18.00px;background:#282828;"></div>
<div style="position:absolute;left:1371px;top:3px;width:91.00px;height:18.00px;background:#3c3c3c;"></div>
<div class="t" style="left:1378px;top:4.5px;letter-spacing:.4px;">RPG Setting</div>
<svg class="a" style="left:1883.5px;top:6.1px" width="3" height="10.2" viewBox="0 0 3 10.2"><path d="M.4 0h2.2v2.3h-2.2zM.4 3.95h2.2v2.3h-2.2zM.4 7.9h2.2v2.3h-2.2z" fill="#cfcfcf"/></svg>
<div style="position:absolute;left:1371px;top:21px;width:515.00px;height:19.00px;background:#3f3f3f;"></div>
<div style="position:absolute;left:1371px;top:40px;width:515.00px;height:1.00px;background:#303030;"></div>
<svg class="a" style="left:1389.0px;top:26.0px" width="9" height="7" viewBox="0 0 9 7"><path d="M0 0H9L4.5 7Z" fill="#7a7a7a"/></svg>
<div class="t" style="left:1411.5px;top:23.7px;color:#c4c4c4;"><span class="j">基本設定</span></div>
<div class="t" style="left:1410px;top:44.5px;">ID</div>
<div class="t" style="left:1598px;top:44.0px;letter-spacing:.3px;">2555</div>
<div class="t" style="left:1410px;top:66.7px;"><span class="j">名前</span></div>
<div class="inp" style="left:1597.3px;top:66px;width:280.3px;height:17.5px"><span></span></div>
<div class="t" style="left:1410px;top:90.7px;"><span class="j">位置</span></div>
<div class="t" style="left:1601px;top:90.0px;">X</div>
<div class="inp" style="left:1615px;top:87.5px;width:122.5px;height:17.5px"><span>10</span></div>
<div class="t" style="left:1745px;top:90.0px;">Y</div>
<div class="inp" style="left:1759.3px;top:87.5px;width:115.5px;height:17.5px"><span>6</span></div>
<div class="t" style="left:1410px;top:112.0px;"><span class="k" style="margin-right:-6.60px">メモ</span></div>
<div class="inp" style="left:1597.3px;top:112.6px;width:280.3px;height:19.0px"><span></span></div>
<div style="position:absolute;left:1371px;top:133px;width:515.00px;height:19.00px;background:#3f3f3f;"></div>
<div style="position:absolute;left:1371px;top:152px;width:515.00px;height:1.00px;background:#303030;"></div>
<svg class="a" style="left:1389.0px;top:137.5px" width="9" height="7" viewBox="0 0 9 7"><path d="M0 0H9L4.5 7Z" fill="#7a7a7a"/></svg>
<div class="t" style="left:1411.5px;top:134.8px;color:#c4c4c4;"><span class="k" style="margin-right:-9.90px">ページ</span><span class="j">設定</span></div>
<div class="t" style="left:1410px;top:158.0px;"><span class="k" style="margin-right:-16.50px">チャプター</span></div>
<div class="btn" style="left:1601px;top:156.3px;width:273.3px;height:17.9px"><span>0001 : <span class="j">名称未設定</span></span></div>
<div class="t" style="left:1410px;top:182.0px;"><span class="k" style="margin-right:-16.50px">セクション</span></div>
<div class="btn" style="left:1601px;top:180.2px;width:273.3px;height:18.0px"><span>0001 : <span class="j">名称未設定</span></span></div>
<svg class="a" style="left:1404.2px;top:205.0px" width="9" height="7" viewBox="0 0 9 7"><path d="M0 0H9L4.5 7Z" fill="#7a7a7a"/></svg>
<div class="t" style="left:1426.4px;top:203.0px;"><span class="k" style="margin-right:-19.80px">テンプレート</span></div>
<div class="t" style="left:1427px;top:222.7px;"><span class="k" style="margin-right:-23.10px">テンプレートの</span><span class="j">読込</span><span class="k" style="margin-right:-3.30px">み</span></div>
<div class="btn" style="left:1429.8px;top:241.3px;width:213.5px;height:17.5px"><span><span class="k" style="margin-right:-16.50px">インポート</span></span></div>
<div class="btn" style="left:1650.8px;top:241.3px;width:223.5px;height:17.5px"><span><span class="k" style="margin-right:-19.80px">エクスポート</span></span></div>
<svg class="a" style="left:1404.2px;top:266.5px" width="9" height="7" viewBox="0 0 9 7"><path d="M0 0H9L4.5 7Z" fill="#7a7a7a"/></svg>
<div class="t" style="left:1426.4px;top:264.7px;"><span class="j">出現条件</span></div>
<div class="chk" style="left:1429.2px;top:286.5px"></div>
<div class="t" style="left:1447.2px;top:286.0px;"><span class="k" style="margin-right:-13.20px">スイッチ</span> 1</div>
<div class="btn dis" style="left:1610.8px;top:284.2px;width:263.5px;height:18.0px"><span>0001 :</span></div>
<div class="chk" style="left:1429.2px;top:310.5px"></div>
<div class="t" style="left:1447.2px;top:310.0px;"><span class="k" style="margin-right:-13.20px">スイッチ</span> 2</div>
<div class="btn dis" style="left:1610.8px;top:308.2px;width:263.5px;height:18.0px"><span>0001 :</span></div>
<div class="chk" style="left:1429.2px;top:334.5px"></div>
<div class="t" style="left:1447.2px;top:334.7px;"><span class="j">変数</span></div>
<div class="btn dis" style="left:1610.8px;top:332.2px;width:169.0px;height:18.0px"><span>0001 : <span class="j">名称未設定</span></span></div>
<div class="t" style="left:1787px;top:333.5px;color:#b8b8b8;font-size:9.5px;">≧</div>
<div class="inp dis" style="left:1802.3px;top:332.2px;width:72.5px;height:18.0px"><span>0</span></div>
<div class="chk" style="left:1429.2px;top:358.5px"></div>
<div class="t" style="left:1447.2px;top:358.0px;"><span class="k" style="margin-right:-23.10px">セルフスイッチ</span></div>
<div class="btn dis" style="left:1610.8px;top:356.2px;width:263.5px;height:18.0px"><span>0001 : A</span></div>
<div class="chk" style="left:1429.2px;top:382.5px"></div>
<div class="t" style="left:1447.2px;top:382.0px;"><span class="k" style="margin-right:-13.20px">アイテム</span></div>
<div class="btn dis" style="left:1610.8px;top:380.2px;width:263.5px;height:18.0px"><span>0001 : -----<span class="j">予備</span></span></div>
<div class="chk" style="left:1429.2px;top:406.5px"></div>
<div class="t" style="left:1447.2px;top:406.0px;"><span class="k" style="margin-right:-13.20px">アクター</span></div>
<div class="btn dis" style="left:1610.8px;top:404.2px;width:263.5px;height:18.0px"><span>0001 : <span class="k" style="margin-right:-13.20px">クラフト</span></span></div>
<div class="chk" style="left:1429.2px;top:430.5px"></div>
<div class="t" style="left:1447.2px;top:430.0px;"><span class="k" style="margin-right:-26.40px">スイッチアイテム</span></div>
<div class="btn dis" style="left:1610.8px;top:428.2px;width:263.5px;height:18.0px"><span>0001 : <span class="k" style="margin-right:-23.10px">ディスチャーム</span></span></div>
<svg class="a" style="left:1404.2px;top:453.5px" width="9" height="7" viewBox="0 0 9 7"><path d="M0 0H9L4.5 7Z" fill="#7a7a7a"/></svg>
<div class="t" style="left:1426.4px;top:451.7px;"><span class="j">画像</span></div>
<div class="btn" style="left:1610.8px;top:471px;width:263.5px;height:17.8px"><span>0001 : <span class="k" style="margin-right:-13.20px">クラフト</span></span></div>
<div style="position:absolute;left:1611px;top:493px;width:78.00px;height:78.00px;background:#555555;border-radius:3px;"></div>
<svg class="a" style="left:1635px;top:495.8px" width="32" height="68" viewBox="0 0 32 68"><use href="#chr" x="0" y="0" width="32" height="68"/></svg>
<div class="chk" style="left:1429.2px;top:514.8px"><svg width="10" height="9" viewBox="0 0 10 9" style="position:absolute;left:2px;top:2.5px"><path d="M1 4.8L3.8 7.6L9 1.4" fill="none" stroke="#e0e0e0" stroke-width="1.6"/></svg></div>
<div class="t" style="left:1447.2px;top:514.0px;"><span class="k" style="margin-right:-19.80px">キャラクター</span></div>
<div style="position:absolute;left:1611px;top:577.4px;width:78.00px;height:77.80px;background:#484848;border-radius:3px;"></div>
<div class="chk" style="left:1429.2px;top:609.8px"></div>
<div class="t" style="left:1447.2px;top:609.7px;"><span class="j">画像</span><span class="k" style="margin-right:-3.30px">を</span><span class="j">選択</span></div>
<div style="position:absolute;left:1611px;top:661.2px;width:78.00px;height:53.80px;background:#484848;border-radius:3px 3px 0 0;"></div>
<div class="chk" style="left:1429.2px;top:693.6px"></div>
<div class="t" style="left:1447.2px;top:693.0px;"><span class="k" style="margin-right:-9.90px">タイル</span></div>
<div style="position:absolute;left:1886px;top:21px;width:14.00px;height:694.00px;background:#353535;"></div>
<svg class="a" style="left:1889.00px;top:26.4px" width="8" height="4.8" viewBox="0 0 8 4.8"><path d="M0 4.8H8L4 0Z" fill="#d0d0d0"/></svg>
<svg class="a" style="left:1889.00px;top:704.6px" width="8" height="4.8" viewBox="0 0 8 4.8"><path d="M0 0H8L4 4.8Z" fill="#d0d0d0"/></svg>
<div style="position:absolute;left:1887.9px;top:37.5px;width:10.20px;height:388.50px;background:#606060;border-radius:5px;"></div>
<div style="position:absolute;left:1371px;top:715px;width:529.00px;height:2.30px;background:#191919;"></div>
<div style="position:absolute;left:1371px;top:717.3px;width:529.00px;height:18.70px;background:#282828;"></div>
<div style="position:absolute;left:1371px;top:717.3px;width:90.60px;height:18.70px;background:#3c3c3c;"></div>
<div class="t" style="left:1378.5px;top:720.0px;"><span class="k" style="margin-right:-26.40px">イベントコマンド</span></div>
<svg class="a" style="left:1883.5px;top:720.6px" width="3" height="10.2" viewBox="0 0 3 10.2"><path d="M.4 0h2.2v2.3h-2.2zM.4 3.95h2.2v2.3h-2.2zM.4 7.9h2.2v2.3h-2.2z" fill="#cfcfcf"/></svg>
<svg class="a" style="left:1380.6px;top:740.0px" width="11.2" height="11.2" viewBox="0 0 11.2 11.2"><path d="M5.6 0L11.2 5.6L5.6 11.2L0 5.6Z" fill="#f2f2f2"/></svg>
<div class="t" style="left:1396.5px;top:739.2px;"><span class="j">文章</span><span class="k" style="margin-right:-3.30px">の</span><span class="j">表示</span></div>
<div class="btn" style="left:1382.7px;top:757.2px;width:198.7px;height:17.8px"><span><span class="k" style="margin-right:-16.50px">プレビュー</span></span></div>
<div class="t" style="left:1379.6px;top:783.7px;"><span class="k" style="margin-right:-19.80px">キャラクター</span><span class="j">指定</span></div>
<div class="btn" style="left:1582.7px;top:781px;width:291.6px;height:18.0px"><span>0001 : <span class="k" style="margin-right:-6.60px">なし</span></span></div>
<div class="t" style="left:1379.6px;top:807.7px;"><span class="j">画像</span></div>
<div class="btn" style="left:1582.7px;top:805px;width:291.6px;height:17.8px"><span><span class="j">画像</span><span class="k" style="margin-right:-13.20px">ファイル</span><span class="j">選択</span></span></div>
<div class="btn" style="left:1582.7px;top:828px;width:291.6px;height:18.0px"><span><span class="k" style="margin-right:-16.50px">インポート</span></span></div>
<div class="btn" style="left:1582.7px;top:990.1px;width:291.6px;height:17.9px"><span><span class="j">画像</span><span class="k" style="margin-right:-13.20px">ファイル</span><span class="j">選択</span></span></div>
<div class="btn" style="left:1582.7px;top:1013.2px;width:291.6px;height:18.0px"><span><span class="k" style="margin-right:-16.50px">インポート</span></span></div>
<div style="position:absolute;left:1886px;top:736px;width:14.00px;height:337.00px;background:#353535;"></div>
<svg class="a" style="left:1889.00px;top:742.1px" width="8" height="4.8" viewBox="0 0 8 4.8"><path d="M0 4.8H8L4 0Z" fill="#d0d0d0"/></svg>
<svg class="a" style="left:1889.00px;top:1062.9px" width="8" height="4.8" viewBox="0 0 8 4.8"><path d="M0 0H8L4 4.8Z" fill="#d0d0d0"/></svg>
<div style="position:absolute;left:1887.9px;top:753.4px;width:10.20px;height:169.00px;background:#606060;border-radius:5px;"></div>
<div style="position:absolute;left:0px;top:1073px;width:1900.00px;height:22.00px;background:#1b1b1b;"></div>
<svg class="a" style="left:-2px;top:1077px" width="13" height="13" viewBox="0 0 13 13"><path d="M6.5 .6L12.8 12.2H.2Z" fill="#f2c12e" stroke="#f2c12e" stroke-width=".8" stroke-linejoin="round"/><path d="M6.5 4.2V8.4M6.5 9.8V11.2" stroke="#191919" stroke-width="1.5"/></svg>
<div id="stat" class="t" style="left:15.2px;top:1077px;font-family:'DejaVu Sans','Liberation Sans',sans-serif;font-size:12.3px;color:#e0b030;letter-spacing:-.327px">A meta data file (.meta) exists but its asset 'Assets/RPGMaker/Storage/Event/JSON/Event/7cfdce70-a64b-432b-9c73-aa78583a5e10-0.json' can't be found. When moving or deleting files outside of Unity, please ensure that the corresponding .meta file is moved or deleted along with it.</div>
<svg class="a" style="left:1798px;top:1077px" width="16" height="16" viewBox="0 0 16 16"><path d="M8 3.4Q11.4 3.4 11.4 8.6Q11.4 13.6 8 13.6Q4.6 13.6 4.6 8.6Q4.6 3.4 8 3.4Z" fill="#f2c12e"/><path d="M5 5L2.6 3M11 5L13.4 3M4.6 8.4H1.8M11.4 8.4H14.2M5 11.4L2.8 13.6M11 11.4L13.2 13.6M6.4 3.6L5.4 1.4M9.6 3.6L10.6 1.4" stroke="#f2c12e" stroke-width="1.2" fill="none"/><path d="M12 9.6V12.6M12 13.8V15" stroke="#191919" stroke-width="3"/><path d="M12 9.6V12.6M12 13.8V15" stroke="#f2c12e" stroke-width="1.4"/></svg>
<svg class="a" style="left:1825px;top:1077px" width="17" height="16" viewBox="0 0 17 16"><ellipse cx="8" cy="4.2" rx="5.7" ry="2.6" fill="#d6d6d6"/><path d="M2.3 6Q8 9.8 13.7 6V8.4Q8 12 2.3 8.4ZM2.3 10Q8 13.8 13.7 10V12.2Q8 15.6 2.3 12.2Z" fill="#d6d6d6"/><path d="M1.2 .6L15.4 15.2" stroke="#1b1b1b" stroke-width="3.4"/><path d="M1.8 1L15 15" stroke="#d6d6d6" stroke-width="1.3"/></svg>
<svg class="a" style="left:1851px;top:1077px" width="17" height="16" viewBox="0 0 17 16"><path d="M2.6 7.2A5.6 5.6 0 0 1 12.6 4.2M13.6 8.8A5.6 5.6 0 0 1 3.6 11.8" fill="none" stroke="#d6d6d6" stroke-width="1.5"/><path d="M10.4 4.6H13.6V1.4ZM5.8 11.4H2.6V14.6Z" fill="#d6d6d6"/><path d="M2 .6L14.8 15.2" stroke="#1b1b1b" stroke-width="3.4"/><path d="M2.6 1L14.4 15" stroke="#d6d6d6" stroke-width="1.3"/></svg>
<svg class="a" style="left:1877px;top:1077px" width="16" height="16" viewBox="0 0 16 16"><circle cx="8" cy="8" r="6.4" fill="none" stroke="#d6d6d6" stroke-width="1.3"/><path d="M5 8.2L7.2 10.4L11.2 5.8" fill="none" stroke="#d6d6d6" stroke-width="1.4"/></svg>
<div style="position:absolute;left:1794.6px;top:1074px;width:1.00px;height:21.00px;background:#141414;"></div>
<div style="position:absolute;left:1820.8px;top:1074px;width:1.00px;height:21.00px;background:#141414;"></div>
<div style="position:absolute;left:1846.6px;top:1074px;width:1.00px;height:21.00px;background:#141414;"></div>
<div style="position:absolute;left:1873.6px;top:1074px;width:1.00px;height:21.00px;background:#141414;"></div>
<div style="position:absolute;left:1898.7px;top:2px;width:1.30px;height:1093.00px;background:#cfcfcf;"></div>
<svg class="a" style="left:1890px;top:1085px" width="10" height="10" viewBox="0 0 10 10"><path d="M10 0V10H0Q8.8 9.6 8.8 0Z" fill="#f0f0f0"/></svg>
</body></html>
